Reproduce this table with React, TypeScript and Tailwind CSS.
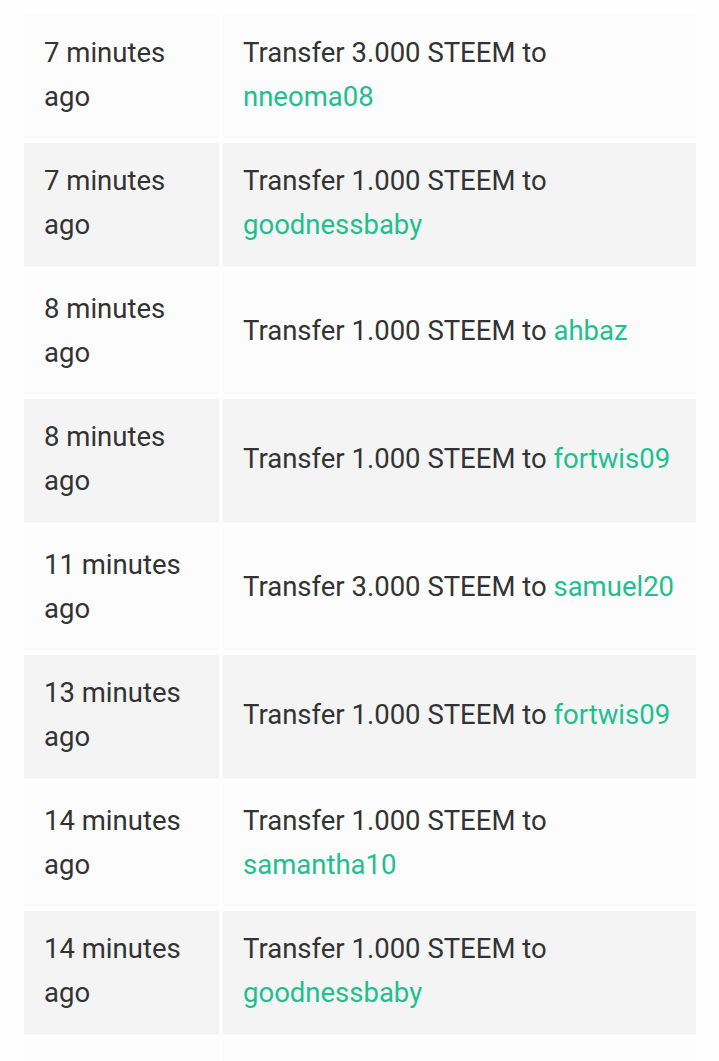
import React from "react";

const rows: { t: string; amt: string; to: string }[] = [
  { t: "7 minutes ago", amt: "3.000", to: "nneoma08" },
  { t: "7 minutes ago", amt: "1.000", to: "goodnessbaby" },
  { t: "8 minutes ago", amt: "1.000", to: "ahbaz" },
  { t: "8 minutes ago", amt: "1.000", to: "fortwis09" },
  { t: "11 minutes ago", amt: "3.000", to: "samuel20" },
  { t: "13 minutes ago", amt: "1.000", to: "fortwis09" },
  { t: "14 minutes ago", amt: "1.000", to: "samantha10" },
  { t: "14 minutes ago", amt: "1.000", to: "goodnessbaby" },
];

export default function App() {
  return (
    <div
      className="h-screen overflow-hidden bg-[#fefefe] pt-[15px] pl-[24px] text-[27.5px] leading-[44px] text-[#333333]"
      style={{ fontFamily: "Roboto, 'Liberation Sans', sans-serif" }}
    >
      <div className="grid grid-cols-[195px_473px] gap-[4px]">
        {rows.map((r, i) => {
          const bg = i % 2 === 0 ? "bg-[#fcfcfc]" : "bg-[#f4f4f4]";
          return (
            <React.Fragment key={i}>
              <div className={`${bg} flex h-[124px] items-center px-[20px] pb-[4px]`}>
                <span>{r.t}</span>
              </div>
              <div className={`${bg} flex h-[124px] items-center px-[20px] pb-[4px]`}>
                <span>
                  Transfer {r.amt} STEEM to{" "}
                  <span className="text-[#1fbf8f]">{r.to}</span>
                </span>
              </div>
            </React.Fragment>
          );
        })}
        <div className="h-[124px] bg-[#fcfcfc]" />
        <div className="h-[124px] bg-[#fcfcfc]" />
      </div>
    </div>
  );
}
